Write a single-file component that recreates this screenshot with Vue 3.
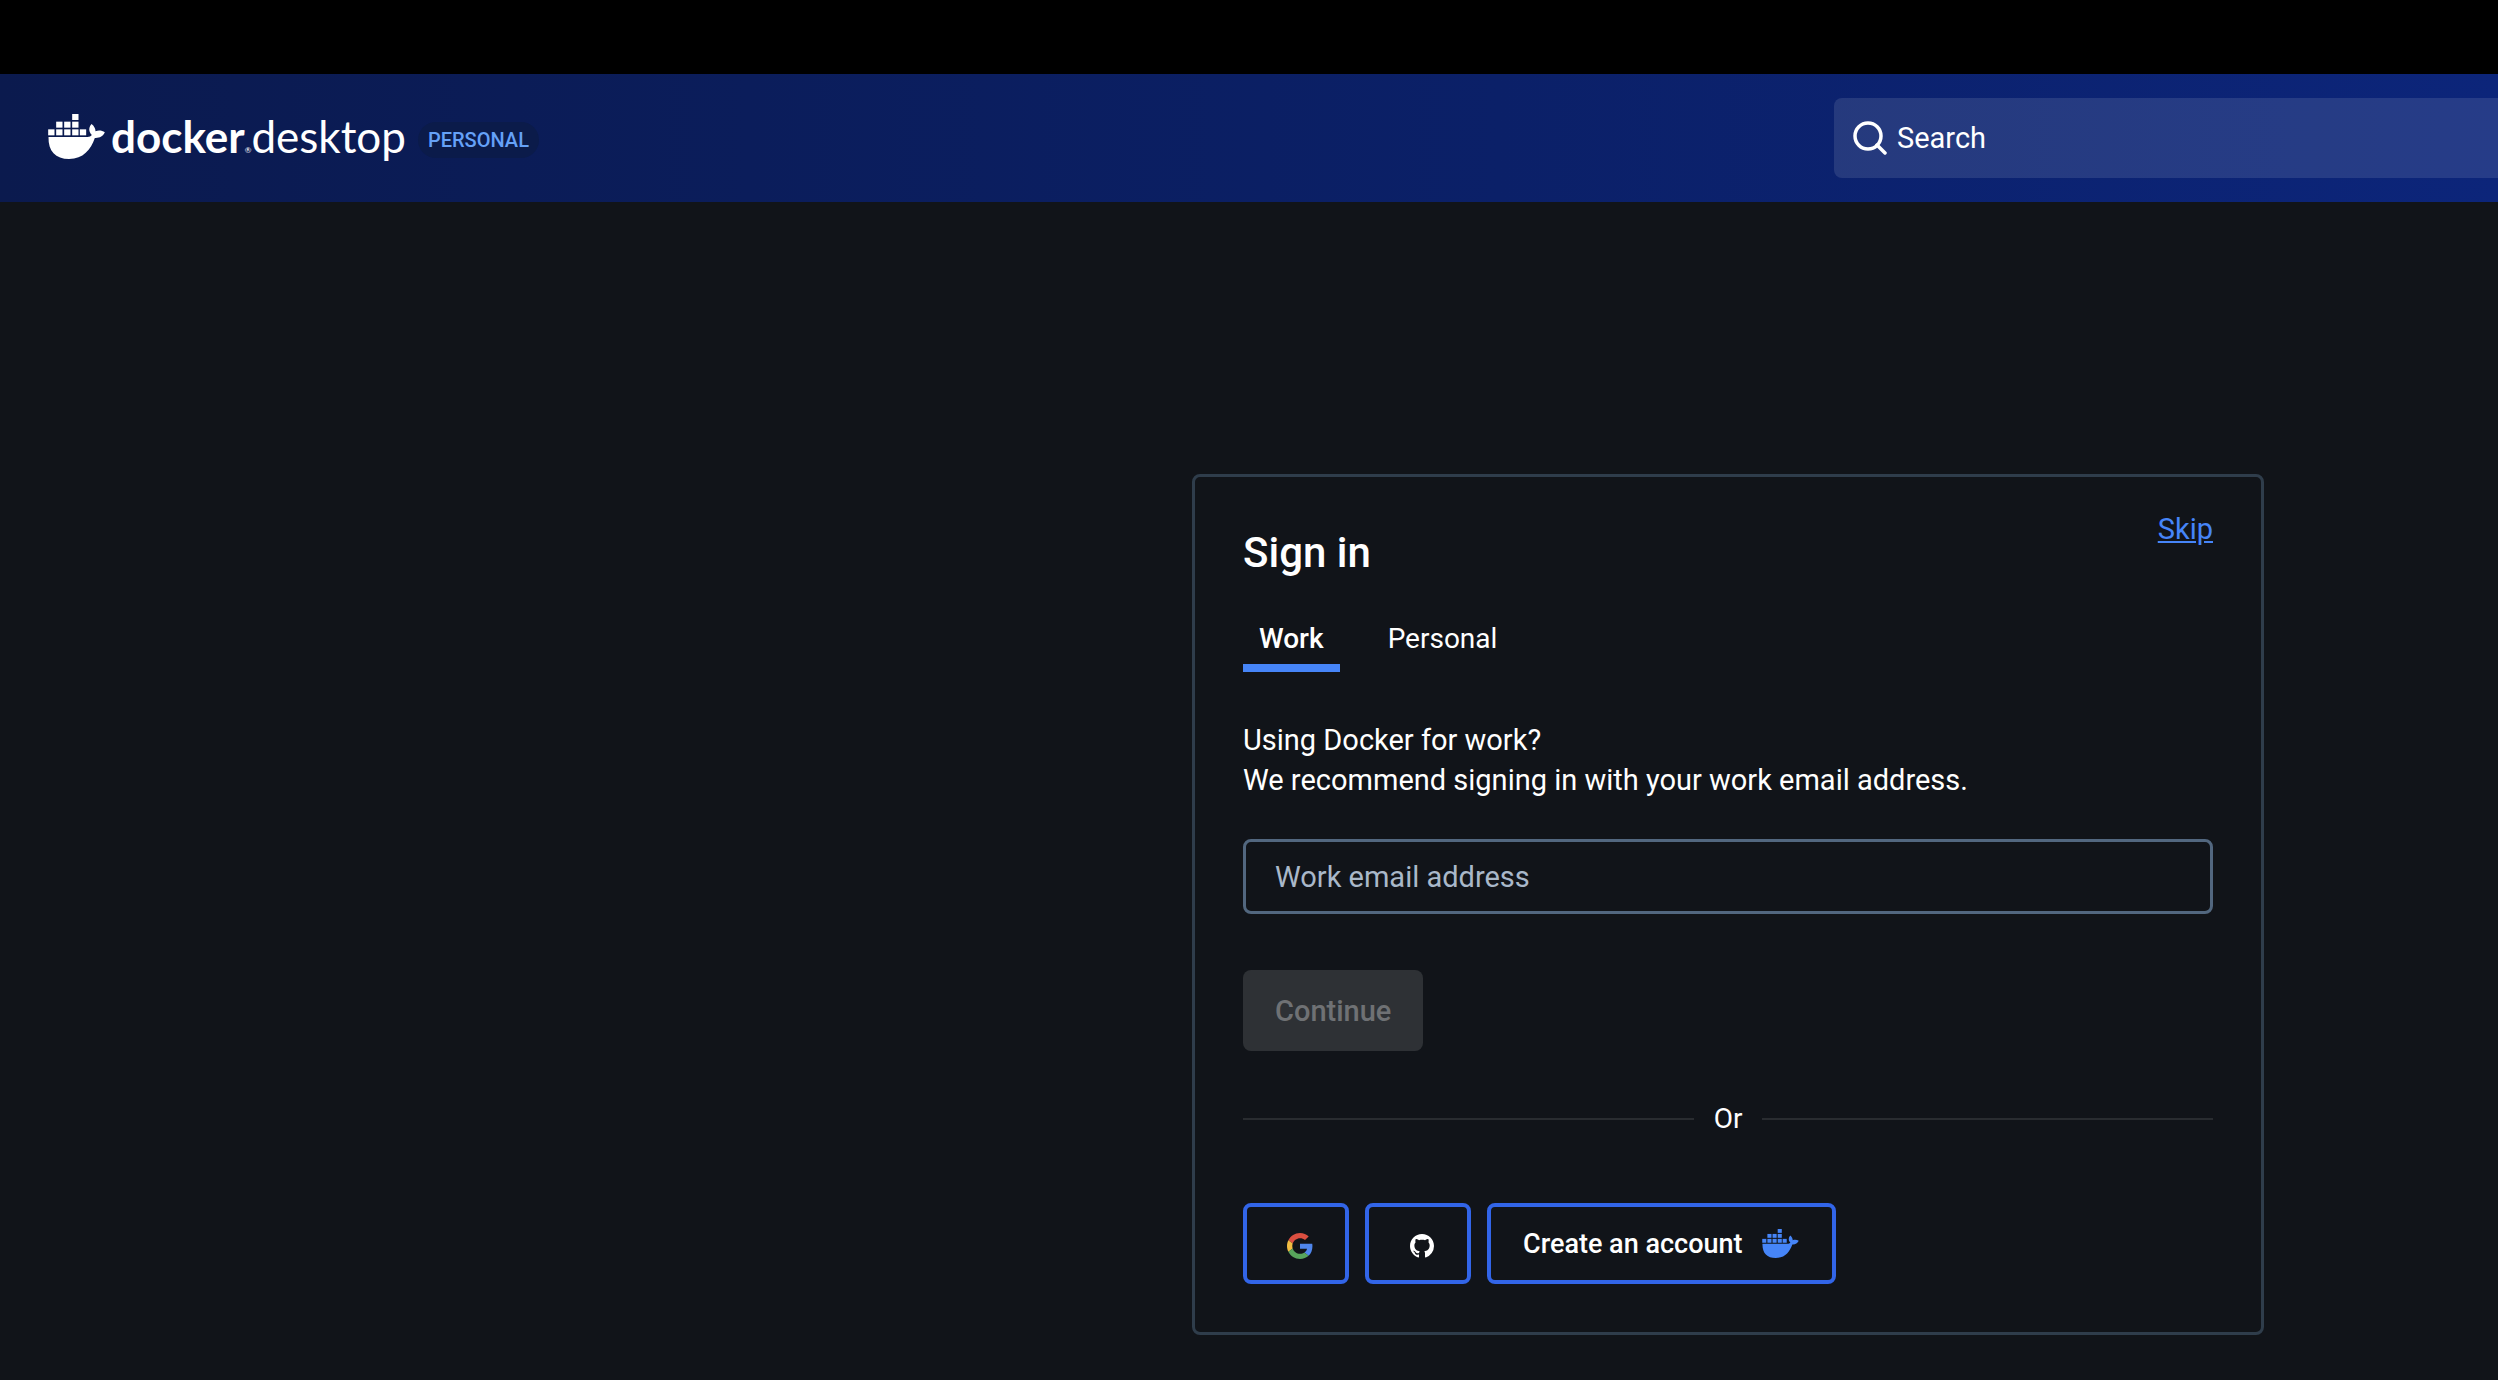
<script setup>
import { ref } from 'vue'

const tabs = ['Work', 'Personal']
const activeTab = ref('Work')
const email = ref('')
const query = ref('')

const containers = [
  [72, 0], [24, 23], [48, 23], [72, 23],
  [0, 46], [24, 46], [48, 46], [72, 46], [95, 46],
]
const hull =
  'M1 69H118C124 69 128 67 131 63C121 53 121 40 130 30C138 36 142 44 142 52C152 48 162 50 170 55C165 67 153 73 140 72C128 107 105 135 63 135C22 135 0 112 1 69Z'
</script>

<template>
  <div class="app">
    <div class="titlebar"></div>

    <header class="topbar">
      <div class="brand">
        <svg class="brand-whale" viewBox="0 0 170 135" aria-hidden="true">
          <rect v-for="([x, y], i) in containers" :key="i" :x="x" :y="y" width="19" height="18" />
          <path :d="hull" />
        </svg>
        <div class="wordmark">
          <span class="wordmark-bold">docker</span><span class="registered">®</span><span class="wordmark-light">desktop</span>
        </div>
        <span class="plan">PERSONAL</span>
      </div>
      <label class="search">
        <svg class="search-icon" viewBox="0 0 34 34" aria-hidden="true">
          <circle cx="15" cy="15" r="13" />
          <path d="M24 24L32 32" />
        </svg>
        <input v-model="query" type="text" placeholder="Search" aria-label="Search" />
      </label>
    </header>

    <main class="content">
      <section class="card">
        <div class="card-head">
          <h1>Sign in</h1>
          <a class="skip" href="#skip">Skip</a>
        </div>

        <div class="tabs" role="tablist">
          <button
            v-for="tab in tabs"
            :key="tab"
            type="button"
            role="tab"
            class="tab"
            :class="{ active: tab === activeTab }"
            :aria-selected="tab === activeTab"
            @click="activeTab = tab"
          >{{ tab }}</button>
        </div>

        <p class="hint">
          Using Docker for work?<br />
          We recommend signing in with your work email address.
        </p>

        <form class="form" @submit.prevent>
          <input v-model="email" class="email" type="email" placeholder="Work email address" aria-label="Work email address" />
          <button class="continue" type="submit" :disabled="!email">Continue</button>
        </form>

        <div class="divider"><span>Or</span></div>

        <div class="providers">
          <button class="provider" type="button" aria-label="Sign in with Google">
            <svg class="google" viewBox="0 0 48 48" aria-hidden="true">
              <path fill="#db4f40" d="M24 9.5c3.54 0 6.71 1.22 9.21 3.6l6.85-6.85C35.9 2.38 30.47 0 24 0 14.62 0 6.51 5.38 2.56 13.22l7.98 6.19C12.43 13.72 17.74 9.5 24 9.5z" />
              <path fill="#4f86ec" d="M46.98 24.55c0-1.57-.15-3.09-.38-4.55H24v9.02h12.94c-.58 2.96-2.26 5.48-4.78 7.18l7.73 6c4.51-4.18 7.09-10.36 7.09-17.65z" />
              <path fill="#f2bd42" d="M10.53 28.59c-.48-1.45-.76-2.99-.76-4.59s.27-3.14.76-4.59l-7.98-6.19C.92 16.46 0 20.12 0 24c0 3.88.92 7.54 2.56 10.78l7.97-6.19z" />
              <path fill="#58a55c" d="M24 48c6.48 0 11.93-2.13 15.89-5.81l-7.73-6c-2.15 1.45-4.92 2.3-8.16 2.3-6.26 0-11.57-4.22-13.47-9.91l-7.98 6.19C6.51 42.62 14.62 48 24 48z" />
            </svg>
          </button>
          <button class="provider" type="button" aria-label="Sign in with GitHub">
            <svg class="github" viewBox="0 0 16 16" aria-hidden="true">
              <path d="M8 0C3.58 0 0 3.58 0 8c0 3.54 2.29 6.53 5.47 7.59.4.07.55-.17.55-.38 0-.19-.01-.82-.01-1.49-2.01.37-2.53-.49-2.69-.94-.09-.23-.48-.94-.82-1.13-.28-.15-.68-.52-.01-.53.63-.01 1.08.58 1.23.82.72 1.21 1.87.87 2.33.66.07-.52.28-.87.51-1.07-1.78-.2-3.64-.89-3.64-3.95 0-.87.31-1.59.82-2.15-.08-.2-.36-1.02.08-2.12 0 0 .67-.21 2.2.82.64-.18 1.32-.27 2-.27s1.36.09 2 .27c1.53-1.04 2.2-.82 2.2-.82.44 1.1.16 1.92.08 2.12.51.56.82 1.27.82 2.15 0 3.07-1.87 3.75-3.65 3.95.29.25.54.73.54 1.48 0 1.07-.01 1.93-.01 2.2 0 .21.15.46.55.38A8.01 8.01 0 0016 8c0-4.42-3.58-8-8-8z" />
            </svg>
          </button>
          <button class="provider create" type="button">
            <span>Create an account</span>
            <svg class="create-whale" viewBox="0 0 170 135" aria-hidden="true">
              <rect v-for="([x, y], i) in containers" :key="i" :x="x" :y="y" width="19" height="18" />
              <path :d="hull" />
            </svg>
          </button>
        </div>
      </section>
    </main>
  </div>
</template>

<style>
body {
  margin: 0;
  background: #111419;
}
</style>

<style scoped>
.app {
  min-height: 100vh;
  background: #111419;
  color: #fff;
  font-family: Roboto, sans-serif;
  font-size: 29px;
  line-height: 40px;
}

.app * {
  box-sizing: border-box;
}

button,
input {
  font: inherit;
  color: inherit;
}

button {
  margin: 0;
  background: none;
  border: 0;
  cursor: pointer;
}

.titlebar {
  height: 74px;
  background: #000;
}

.topbar {
  display: flex;
  align-items: center;
  justify-content: space-between;
  height: 128px;
  padding-left: 48px;
  background: linear-gradient(90deg, #0b1a4e, #0b2068 60%, #0c257a);
}

.brand {
  display: flex;
  align-items: center;
}

.brand-whale {
  width: 57px;
  height: 45px;
  margin-bottom: 4px;
  fill: #fff;
}

.wordmark {
  display: flex;
  align-items: baseline;
  margin-left: 6px;
  padding-top: 10px;
  font-family: Lato, sans-serif;
  font-size: 44px;
  line-height: 48px;
}

.wordmark-bold {
  font-weight: 700;
}

.registered {
  font-size: 8px;
}

.plan {
  margin: 4px 0 0 12px;
  padding: 0 10px;
  border-radius: 18px;
  background: #0b1b4a;
  color: #65a1f8;
  font-size: 20px;
  font-weight: 500;
  line-height: 36px;
}

.search {
  display: flex;
  align-items: center;
  gap: 10px;
  width: 664px;
  height: 80px;
  padding-left: 19px;
  border-radius: 8px 0 0 8px;
  background: rgba(255, 255, 255, 0.11);
}

.search-icon {
  flex: none;
  width: 34px;
  height: 34px;
  fill: none;
  stroke: #fff;
  stroke-width: 3.5;
  stroke-linecap: round;
}

.search input {
  flex: 1;
  min-width: 0;
  padding: 0;
  border: 0;
  outline: 0;
  background: none;
}

.search input::placeholder {
  color: #fff;
  opacity: 1;
}

.content {
  display: flex;
  justify-content: flex-end;
  padding: 272px 234px 44px 48px;
}

.card {
  width: 100%;
  max-width: 1072px;
  padding: 32px 48px 48px;
  border: 3px solid #2f3d4b;
  border-radius: 8px;
}

.card-head {
  display: flex;
  align-items: flex-start;
  justify-content: space-between;
}

h1 {
  margin: 16px 0 38px;
  font-size: 42px;
  font-weight: 500;
  line-height: 56px;
}

.skip {
  color: #4685f8;
  text-decoration: underline;
}

.tabs {
  display: flex;
  gap: 32px;
}

.tab {
  padding: 0 16px 5px;
  border-bottom: 8px solid transparent;
  font-size: 28px;
}

.tab.active {
  border-color: #4685f8;
  font-weight: 500;
}

.hint {
  margin: 48px 0 39px;
}

.form {
  display: flex;
  flex-direction: column;
  align-items: flex-start;
  gap: 56px;
}

.email {
  width: 100%;
  height: 75px;
  padding: 0 29px;
  border: 3px solid #52677f;
  border-radius: 8px;
  outline: 0;
  background: none;
}

.email::placeholder {
  color: #a9b8c9;
  opacity: 1;
}

.continue {
  height: 81px;
  padding: 0 32px;
  border-radius: 8px;
  background: #2e3135;
  font-weight: 500;
}

.continue:disabled {
  color: #6f7174;
}

.divider {
  display: flex;
  align-items: center;
  gap: 20px;
  margin: 48px 0 64px;
  font-size: 28px;
}

.divider::before,
.divider::after {
  content: '';
  flex: 1;
  height: 2px;
  background: #292c30;
}

.providers {
  display: flex;
  gap: 16px;
}

.provider {
  display: flex;
  align-items: center;
  justify-content: center;
  width: 106px;
  height: 81px;
  padding: 0;
  border: 4px solid #3265e8;
  border-radius: 8px;
}

.google {
  width: 26px;
  height: 26px;
  margin: 4px 0 0 7px;
}

.github {
  width: 24px;
  height: 24px;
  margin: 4px 0 0 7px;
  fill: #fff;
}

.create {
  justify-content: flex-start;
  gap: 19px;
  width: 349px;
  padding-left: 32px;
  font-size: 27px;
  font-weight: 500;
}

.create-whale {
  width: 37px;
  height: 29px;
  fill: #4685f8;
}
</style>
